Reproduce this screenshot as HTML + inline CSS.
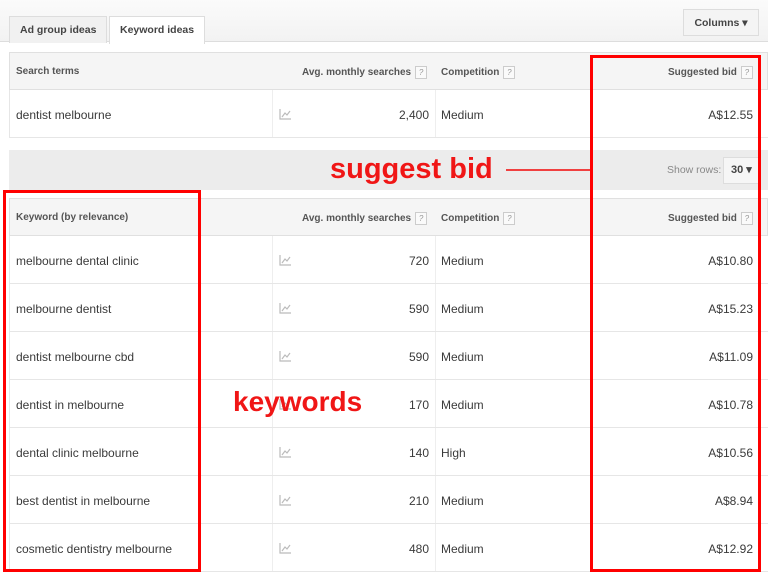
<!DOCTYPE html><html><head><style>
body{margin:0;width:768px;height:575px;overflow:hidden;background:#fff;font-family:"Liberation Sans",Arial,sans-serif;color:#3a3a3a;position:relative}
.a{position:absolute}
.tab{position:absolute;top:16px;height:26px;border:1px solid #ddd;border-bottom:none;font-size:10.5px;font-weight:bold;line-height:26px;padding:0 10px;color:#444}
.hdr{position:absolute;left:9px;width:759px;height:38px;background:#f5f5f5;border:1px solid #e0e0e0;box-sizing:border-box;font-size:10px;font-weight:bold;color:#555}
.hdr span{position:absolute;top:13px}
.q{display:inline-block;width:10px;height:11px;border:1px solid #ccc;font-size:8px;line-height:11px;text-align:center;color:#999;font-weight:normal;margin-left:4px;vertical-align:middle;background:#fafafa}
.row{position:absolute;left:9px;width:759px;height:48px;border-bottom:1px solid #e6e6e6;border-left:1px solid #e6e6e6;box-sizing:border-box;font-size:12px}
.row span{position:absolute;top:18px}
.sep{position:absolute;top:0;bottom:0;border-left:1px solid #eee}
.ic{position:absolute;left:269px;top:19px;width:12px;height:11px}
.red{position:absolute;border:3px solid #f00;box-sizing:border-box}
.big{position:absolute;color:#f01616;font-weight:bold;font-size:29px}
</style></head><body>
<div class="a" style="left:0;top:0;width:768px;height:42px;background:linear-gradient(#fbfbfb,#f2f2f2)"></div>
<div class="a" style="left:0;top:41px;width:768px;border-top:1px solid #ddd"></div>
<div class="tab" style="left:9px;background:#f1f1f1">Ad group ideas</div>
<div class="tab" style="left:109px;background:#fff;height:27px">Keyword ideas</div>
<div class="a" style="left:683px;top:9px;width:76px;height:27px;border:1px solid #ddd;background:#f4f4f4;font-size:10.5px;font-weight:bold;line-height:27px;text-align:center;color:#444;box-sizing:border-box">Columns ▾</div>

<div class="hdr" style="top:52px"><span style="left:6px">Search terms</span><span style="left:292px">Avg. monthly searches<i class="q">?</i></span><span style="left:431px">Competition<i class="q">?</i></span><span style="left:658px">Suggested bid<i class="q">?</i></span></div>
<div class="row" style="top:90px"><div class="sep" style="left:262px"></div><div class="sep" style="left:425px"></div><svg class="ic" viewBox="0 0 12 11"><path d="M1 0V10H12M3 8L6 4L8 6L11 2" fill="none" stroke="#bbb" stroke-width="1.2"/></svg><span style="left:6px">dentist melbourne</span><span style="right:339px">2,400</span><span style="left:431px">Medium</span><span style="right:15px">A$12.55</span></div>

<div class="a" style="left:9px;top:150px;width:759px;height:40px;background:#ececec"></div>
<div class="a" style="left:667px;top:164px;font-size:10.5px;color:#888">Show rows:</div>
<div class="a" style="left:723px;top:157px;width:37px;height:27px;background:#f6f6f6;border:1px solid #ddd;box-sizing:border-box;font-size:11px;font-weight:bold;line-height:25px;padding-left:7px;color:#444">30 ▾</div>

<div class="hdr" style="top:198px"><span style="left:6px">Keyword (by relevance)</span><span style="left:292px">Avg. monthly searches<i class="q">?</i></span><span style="left:431px">Competition<i class="q">?</i></span><span style="left:658px">Suggested bid<i class="q">?</i></span></div>

<div class="row" style="top:236px"><div class="sep" style="left:262px"></div><div class="sep" style="left:425px"></div><svg class="ic" viewBox="0 0 12 11"><path d="M1 0V10H12M3 8L6 4L8 6L11 2" fill="none" stroke="#bbb" stroke-width="1.2"/></svg><span style="left:6px">melbourne dental clinic</span><span style="right:339px">720</span><span style="left:431px">Medium</span><span style="right:15px">A$10.80</span></div>
<div class="row" style="top:284px"><div class="sep" style="left:262px"></div><div class="sep" style="left:425px"></div><svg class="ic" viewBox="0 0 12 11"><path d="M1 0V10H12M3 8L6 4L8 6L11 2" fill="none" stroke="#bbb" stroke-width="1.2"/></svg><span style="left:6px">melbourne dentist</span><span style="right:339px">590</span><span style="left:431px">Medium</span><span style="right:15px">A$15.23</span></div>
<div class="row" style="top:332px"><div class="sep" style="left:262px"></div><div class="sep" style="left:425px"></div><svg class="ic" viewBox="0 0 12 11"><path d="M1 0V10H12M3 8L6 4L8 6L11 2" fill="none" stroke="#bbb" stroke-width="1.2"/></svg><span style="left:6px">dentist melbourne cbd</span><span style="right:339px">590</span><span style="left:431px">Medium</span><span style="right:15px">A$11.09</span></div>
<div class="row" style="top:380px"><div class="sep" style="left:262px"></div><div class="sep" style="left:425px"></div><svg class="ic" viewBox="0 0 12 11"><path d="M1 0V10H12M3 8L6 4L8 6L11 2" fill="none" stroke="#bbb" stroke-width="1.2"/></svg><span style="left:6px">dentist in melbourne</span><span style="right:339px">170</span><span style="left:431px">Medium</span><span style="right:15px">A$10.78</span></div>
<div class="row" style="top:428px"><div class="sep" style="left:262px"></div><div class="sep" style="left:425px"></div><svg class="ic" viewBox="0 0 12 11"><path d="M1 0V10H12M3 8L6 4L8 6L11 2" fill="none" stroke="#bbb" stroke-width="1.2"/></svg><span style="left:6px">dental clinic melbourne</span><span style="right:339px">140</span><span style="left:431px">High</span><span style="right:15px">A$10.56</span></div>
<div class="row" style="top:476px"><div class="sep" style="left:262px"></div><div class="sep" style="left:425px"></div><svg class="ic" viewBox="0 0 12 11"><path d="M1 0V10H12M3 8L6 4L8 6L11 2" fill="none" stroke="#bbb" stroke-width="1.2"/></svg><span style="left:6px">best dentist in melbourne</span><span style="right:339px">210</span><span style="left:431px">Medium</span><span style="right:15px">A$8.94</span></div>
<div class="row" style="top:524px"><div class="sep" style="left:262px"></div><div class="sep" style="left:425px"></div><svg class="ic" viewBox="0 0 12 11"><path d="M1 0V10H12M3 8L6 4L8 6L11 2" fill="none" stroke="#bbb" stroke-width="1.2"/></svg><span style="left:6px">cosmetic dentistry melbourne</span><span style="right:339px">480</span><span style="left:431px">Medium</span><span style="right:15px">A$12.92</span></div>

<div class="red" style="left:590px;top:55px;width:171px;height:517px"></div>
<div class="red" style="left:3px;top:190px;width:198px;height:382px"></div>
<div class="big" style="left:330px;top:153px">suggest bid</div>
<div class="a" style="left:506px;top:169px;width:84px;height:2px;background:#f04040"></div>
<div class="big" style="left:233px;top:386px;font-size:28px">keywords</div>
</body></html>
